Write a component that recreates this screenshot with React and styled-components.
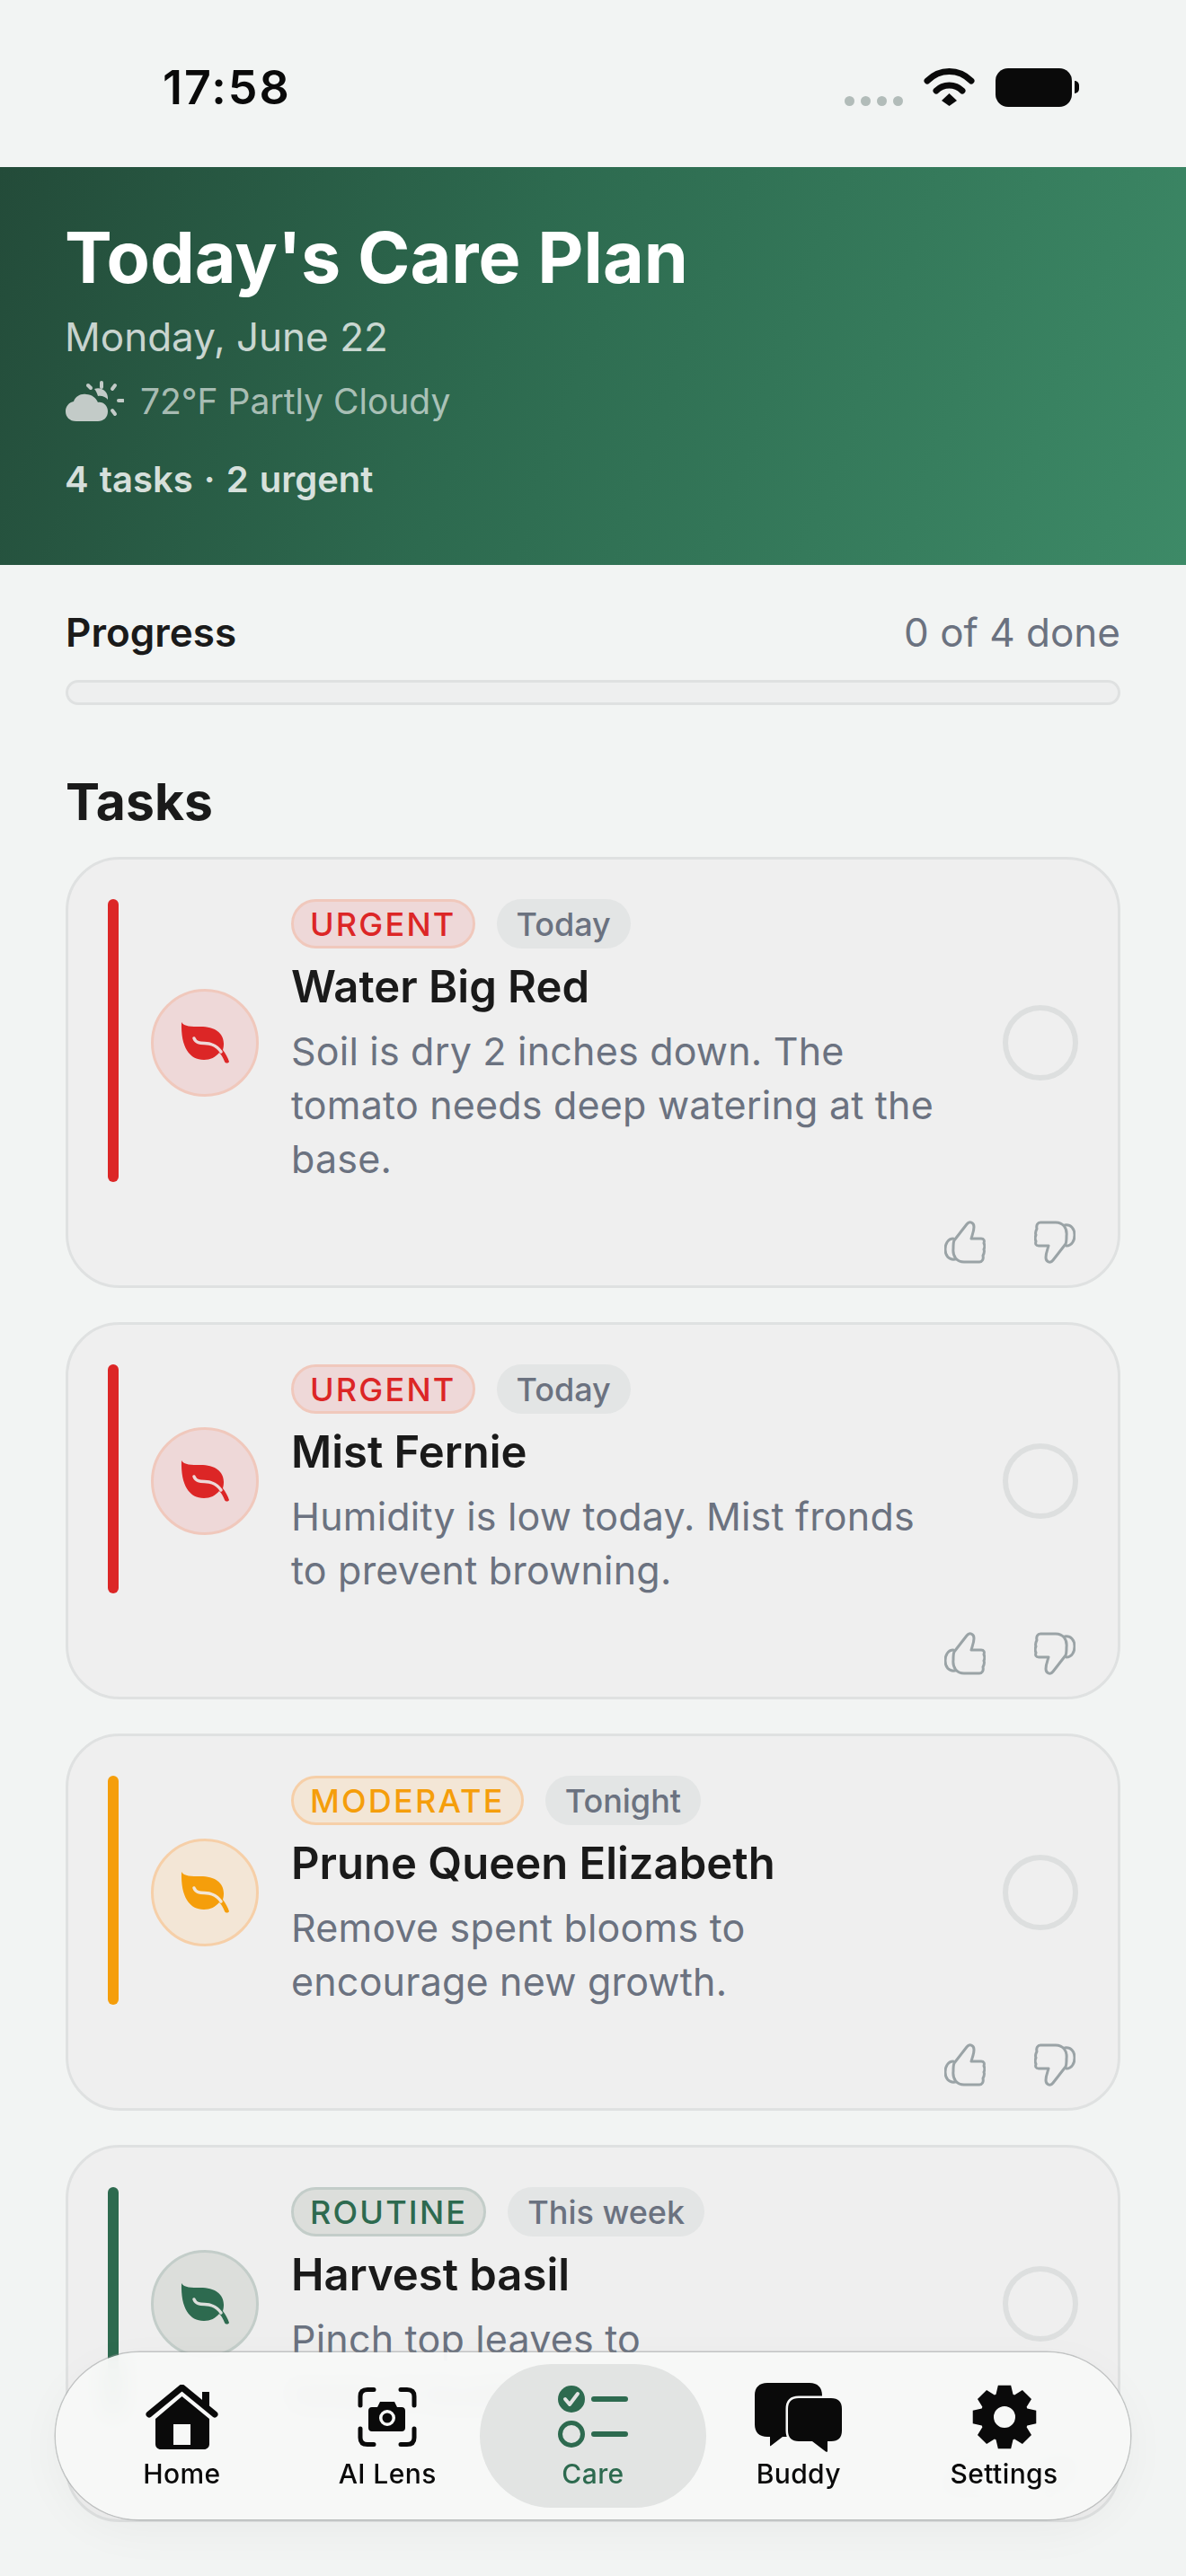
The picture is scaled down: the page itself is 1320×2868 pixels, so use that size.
import React from 'react';
import styled, { createGlobalStyle } from 'styled-components';

const tones = {
  urgent: { main: '#dc2626', soft: '#eed8d8', edge: '#f0c8bc' },
  moderate: { main: '#f59e0b', soft: '#f3e6d6', edge: '#f6cfa8' },
  routine: { main: '#2d6a4f', soft: '#dcdedb', edge: '#c3cdc9' },
};

const GlobalStyle = createGlobalStyle`
  html, body {
    margin: 0;
    padding: 0;
    background: #f2f4f3;
  }
  body {
    font-family: Inter, "Liberation Sans", sans-serif;
    color: #1a1a1a;
  }
`;

const Screen = styled.div`
  position: relative;
  width: 1320px;
  height: 2868px;
  overflow: hidden;
  background: #f2f4f3;
`;

const StatusBar = styled.div`
  height: 186px;
  box-sizing: border-box;
  padding: 0 127px 0 181px;
  display: flex;
  align-items: center;
  justify-content: space-between;
`;

const Clock = styled.div`
  font-size: 52px;
  font-weight: 600;
  letter-spacing: 2px;
  color: #0a0a0a;
  margin-top: 9px;
`;

const StatusIcons = styled.div`
  display: flex;
  align-items: center;
  gap: 23px;
  margin-top: 8px;
`;

const SignalDots = styled.div`
  display: flex;
  gap: 7px;
  margin-top: 30px;
`;

const SignalDot = styled.span`
  width: 11px;
  height: 11px;
  border-radius: 50%;
  background: #b2bcb9;
`;

const Battery = styled.div`
  position: relative;
  width: 85px;
  height: 43px;
  border-radius: 14px;
  background: #0a0a0a;

  &::after {
    content: '';
    position: absolute;
    right: -8px;
    top: 14px;
    width: 5px;
    height: 14px;
    border-radius: 0 6px 6px 0;
    background: #0a0a0a;
  }
`;

const Hero = styled.header`
  height: 443px;
  box-sizing: border-box;
  padding: 51px 72px 0;
  background: linear-gradient(110deg, #234b39 0%, #2d6a4f 42%, #3d8a67 100%);
  color: #fff;
`;

const HeroTitle = styled.h1`
  margin: 0;
  font-size: 79px;
  line-height: 98px;
  font-weight: 700;
  color: #fff;
`;

const HeroDate = styled.div`
  margin-top: 12px;
  font-size: 44px;
  line-height: 56px;
  color: rgba(255, 255, 255, 0.75);
`;

const Weather = styled.div`
  margin-top: 18px;
  display: flex;
  align-items: center;
  gap: 18px;
  font-size: 39px;
  line-height: 52px;
  color: rgba(255, 255, 255, 0.62);
`;

const HeroCount = styled.div`
  margin-top: 36px;
  font-size: 40px;
  line-height: 50px;
  font-weight: 600;
  word-spacing: 2px;
  color: rgba(255, 255, 255, 0.82);
`;

const Content = styled.main`
  padding: 50px 73px 0;
`;

const ProgressRow = styled.div`
  display: flex;
  align-items: center;
  justify-content: space-between;
  font-size: 44px;
  line-height: 50px;
`;

const ProgressLabel = styled.span`
  font-weight: 600;
`;

const ProgressValue = styled.span`
  color: #6b7280;
`;

const ProgressTrack = styled.div`
  margin-top: 28px;
  height: 28px;
  box-sizing: border-box;
  border: 3px solid #dfe1e1;
  border-radius: 14px;
  background: #eeefef;
`;

const SectionTitle = styled.h2`
  margin: 72px 0 25px;
  font-size: 57px;
  line-height: 72px;
  font-weight: 700;
`;

const TaskList = styled.div`
  display: flex;
  flex-direction: column;
  gap: 38px;
`;

const Card = styled.article`
  box-sizing: border-box;
  border: 3px solid #dfe1e1;
  border-radius: 60px;
  background: #efefef;
  padding: 44px 44px 24px 44px;
`;

const CardBody = styled.div`
  display: flex;
  align-items: stretch;
  gap: 36px;
`;

const SeverityBar = styled.div`
  width: 12px;
  flex: none;
  margin-bottom: 4px;
  border-radius: 6px;
  background: ${(p) => tones[p.$tone].main};
`;

const LeafBadge = styled.div`
  flex: none;
  align-self: center;
  width: 120px;
  height: 120px;
  box-sizing: border-box;
  border: 3px solid ${(p) => tones[p.$tone].edge};
  border-radius: 50%;
  background: ${(p) => tones[p.$tone].soft};
  display: flex;
  align-items: center;
  justify-content: center;
`;

const CardText = styled.div`
  flex: 1;
  min-width: 0;
`;

const TagRow = styled.div`
  display: flex;
  gap: 24px;
`;

const SeverityTag = styled.span`
  height: 55px;
  box-sizing: border-box;
  padding: 0 18px;
  display: flex;
  align-items: center;
  border: 3px solid ${(p) => tones[p.$tone].edge};
  border-radius: 28px;
  background: ${(p) => tones[p.$tone].soft};
  color: ${(p) => tones[p.$tone].main};
  font-size: 36px;
  font-weight: 500;
  letter-spacing: 2.2px;
`;

const TimeTag = styled.span`
  height: 55px;
  box-sizing: border-box;
  padding: 0 22px;
  display: flex;
  align-items: center;
  border-radius: 28px;
  background: #e3e5e5;
  color: #6b7280;
  font-size: 36px;
  font-weight: 500;
`;

const TaskTitle = styled.h3`
  margin: 10px 0 0;
  font-size: 49px;
  line-height: 66px;
  font-weight: 600;
  color: #1a1a1a;
`;

const TaskNote = styled.p`
  margin: 8px 0 0;
  font-size: 43px;
  line-height: 60px;
  letter-spacing: 0.2px;
  color: #6b7280;
`;

const CheckRing = styled.div`
  flex: none;
  align-self: center;
  width: 84px;
  height: 84px;
  box-sizing: border-box;
  border: 6px solid #dddfdf;
  border-radius: 50%;
`;

const Feedback = styled.div`
  margin-top: 39px;
  padding-right: 3px;
  display: flex;
  justify-content: flex-end;
  gap: 54px;
`;

const TabBar = styled.nav`
  position: absolute;
  left: 62px;
  top: 2619px;
  width: 1196px;
  height: 186px;
  box-sizing: border-box;
  padding: 0 26px;
  display: grid;
  grid-template-columns: repeat(5, 1fr);
  border-radius: 93px;
  background: rgba(248, 249, 248, 0.93);
  backdrop-filter: blur(14px);
  box-shadow: 0 0 0 1.5px rgba(140, 145, 145, 0.45), 0 14px 50px rgba(0, 0, 0, 0.04);
`;

const TabItem = styled.div`
  margin: 13px ${(p) => (p.$active ? '-12px' : '0')};
  display: flex;
  flex-direction: column;
  align-items: center;
  border-radius: 80px;
  background: ${(p) => (p.$active ? '#e2e4e3' : 'transparent')};
  color: ${(p) => (p.$active ? '#2d6a4f' : '#0a0a0a')};
`;

const TabIcon = styled.div`
  height: 78px;
  margin-top: 20px;
  display: flex;
  align-items: center;
  justify-content: center;
`;

const TabLabel = styled.div`
  margin-top: 5px;
  font-size: 30px;
  line-height: 38px;
  font-weight: 500;
  letter-spacing: 0.4px;
`;

const WifiIcon = () => (
  <svg width="57" height="43" viewBox="0 0 57 43" fill="none" stroke="#0a0a0a" strokeWidth="7" strokeLinecap="round">
    <path d="M4 14C18 0 39 0 53 14" />
    <path d="M14 25C22 17 35 17 43 25" />
    <path d="M20 36L28.5 28L37 36L28.5 42Z" fill="#0a0a0a" stroke="none" />
  </svg>
);

const WeatherIcon = () => (
  <svg width="66" height="46" viewBox="0 0 66 46" fill="#c3cbc8">
    <path d="M33 9C40 6 49 11 48 21C46 18 41 16 37 17C36 14 35 11 33 9Z" />
    <path d="M13 45C5 45 1 40 1 34C1 28 5 24 10 23C12 17 18 14 24 15C30 15 35 19 37 24C43 23 48 28 48 34C48 41 43 45 37 45Z" />
    <g stroke="#c3cbc8" strokeWidth="4" strokeLinecap="round" fill="none">
      <path d="M41 2V7" />
      <path d="M26 5L29 8" />
      <path d="M56 5L53 9" />
      <path d="M60 22H65" />
      <path d="M53 33L56 37" />
    </g>
  </svg>
);

const LeafIcon = ({ tone }) => (
  <svg width="54" height="46" viewBox="0 0 54 46">
    <path
      fill={tones[tone].main}
      d="M1 0C4 5 12 5 22 5C38 5 48 12 48 24C48 27 47.5 29 47 31C50 35 52.5 39 54 44C53 46 50 46 49 44C47.5 40 46 37 43 34C39 39 33 42 26 42C10 42 0 28 1 0Z"
    />
    <path
      fill="none"
      stroke={tones[tone].soft}
      strokeWidth="3.5"
      strokeLinecap="round"
      d="M15 18C18 26 28 22 35 25C40 27 43 30 45 33"
    />
  </svg>
);

const ThumbIcon = ({ down }) => (
  <svg
    width="46"
    height="48"
    viewBox="0 0 46 48"
    fill="none"
    stroke="#9aa3a6"
    strokeWidth="3"
    strokeLinecap="round"
    strokeLinejoin="round"
    transform={down ? 'rotate(180)' : undefined}
  >
    <path d="M11 22L25 4C28 0 33 2 33 7C33 12 31 16 30 20H41C44 20 45 22 44 25C45 27 45 30 44 32C45 34 44 37 43 39C44 43 42 46 39 46H22C14 46 9 40 10 31C10 27 10 24 11 22Z" />
    <path d="M10 20C4 20 1 26 1 32C1 39 5 44 12 43" />
  </svg>
);

const HomeIcon = () => (
  <svg width="81" height="72" viewBox="0 0 81 72" fill="currentColor">
    <path fill="none" stroke="currentColor" strokeWidth="7" strokeLinecap="round" strokeLinejoin="round" d="M4 33L40.5 3L77 33" />
    <path d="M63 8H71V26L63 20Z" />
    <path
      fillRule="evenodd"
      d="M40.5 13L71 38V66C71 69.5 68.5 72 65 72H17C13.5 72 11 69.5 11 66V38ZM31 44V67H50V44Z"
    />
  </svg>
);

const LensIcon = () => (
  <svg width="66" height="66" viewBox="0 0 66 66" fill="none">
    <g stroke="currentColor" strokeWidth="5" strokeLinecap="round">
      <path d="M3 20V10C3 5 6 2.5 11 2.5H18" />
      <path d="M48 2.5H55C60 2.5 63 5 63 10V20" />
      <path d="M3 46V56C3 61 6 63.5 11 63.5H18" />
      <path d="M48 63.5H55C60 63.5 63 61 63 56V46" />
    </g>
    <path
      fill="currentColor"
      fillRule="evenodd"
      d="M16 22H22L25 16H41L44 22H49C51.5 22 53 23.5 53 26V45C53 47.5 51.5 49 49 49H16C13.5 49 12 47.5 12 45V26C12 23.5 13.5 22 16 22ZM33 25A9 9 0 1 0 33 43A9 9 0 1 0 33 25ZM33 28.5A5.5 5.5 0 1 1 33 39.5A5.5 5.5 0 1 1 33 28.5Z"
    />
  </svg>
);

const CareIcon = () => (
  <svg width="78" height="70" viewBox="0 0 78 70" fill="none" stroke="currentColor">
    <circle cx="15" cy="15" r="15" fill="currentColor" stroke="none" />
    <path d="M8 15L13 21L22 9" stroke="#e2e4e3" strokeWidth="4" strokeLinecap="round" strokeLinejoin="round" />
    <circle cx="15" cy="54" r="12.5" strokeWidth="5" />
    <path d="M40 15H75M40 54H75" strokeWidth="6" strokeLinecap="round" />
  </svg>
);

const BuddyIcon = () => (
  <svg width="97" height="77" viewBox="0 0 97 77" fill="currentColor">
    <path d="M14 0H61C70 0 75 5 75 14V46C75 55 70 60 61 60H31L18 70C17 70.5 17 70.5 17 69V60H14C5 60 0 55 0 46V14C0 5 5 0 14 0Z" />
    <path
      stroke="#f7f8f7"
      strokeWidth="5"
      paintOrder="stroke"
      d="M49 17H85C93 17 97 21 97 29V53C97 61 93 65 85 65H81V76C81 77 80 77 79 76.5L64 65H49C41 65 37 61 37 53V29C37 21 41 17 49 17Z"
    />
  </svg>
);

// eight flat teeth round a ring, computed so they stay evenly spaced
const gearPath = (() => {
  const pts = [];
  for (let i = 0; i < 8; i++) {
    const a = (i * Math.PI) / 4;
    [[-0.36, 27], [-0.2, 36], [0.2, 36], [0.36, 27]].forEach(([da, r]) => {
      pts.push(`${(36 + r * Math.sin(a + da)).toFixed(2)} ${(36 - r * Math.cos(a + da)).toFixed(2)}`);
    });
  }
  return `M${pts.join('L')}Z`;
})();

const GearIcon = () => (
  <svg width="72" height="72" viewBox="0 0 72 72" fill="currentColor">
    <path
      fillRule="evenodd"
      d={`${gearPath}M36 24A12 12 0 1 0 36 48A12 12 0 1 0 36 24Z`}
    />
  </svg>
);

const tasks = [
  { id: 1, tone: 'urgent', tag: 'URGENT', when: 'Today', title: 'Water Big Red', note: <>Soil is dry 2 inches down. The<br />tomato needs deep watering at the<br />base.</> },
  { id: 2, tone: 'urgent', tag: 'URGENT', when: 'Today', title: 'Mist Fernie', note: <>Humidity is low today. Mist fronds<br />to prevent browning.</> },
  { id: 3, tone: 'moderate', tag: 'MODERATE', when: 'Tonight', title: 'Prune Queen Elizabeth', note: <>Remove spent blooms to<br />encourage new growth.</> },
  { id: 4, tone: 'routine', tag: 'ROUTINE', when: 'This week', title: 'Harvest basil', note: <>Pinch top leaves to<br />keep it bushy.</> },
];

const tabs = [
  { label: 'Home', icon: <HomeIcon /> },
  { label: 'AI Lens', icon: <LensIcon /> },
  { label: 'Care', icon: <CareIcon />, active: true },
  { label: 'Buddy', icon: <BuddyIcon /> },
  { label: 'Settings', icon: <GearIcon /> },
];

function App() {
  return (
    <Screen>
      <GlobalStyle />
      <StatusBar>
        <Clock>17:58</Clock>
        <StatusIcons>
          <SignalDots>
            <SignalDot />
            <SignalDot />
            <SignalDot />
            <SignalDot />
          </SignalDots>
          <WifiIcon />
          <Battery />
        </StatusIcons>
      </StatusBar>
      <Hero>
        <HeroTitle>Today's Care Plan</HeroTitle>
        <HeroDate>Monday, June 22</HeroDate>
        <Weather>
          <WeatherIcon />
          72°F Partly Cloudy
        </Weather>
        <HeroCount>4 tasks · 2 urgent</HeroCount>
      </Hero>
      <Content>
        <ProgressRow>
          <ProgressLabel>Progress</ProgressLabel>
          <ProgressValue>0 of 4 done</ProgressValue>
        </ProgressRow>
        <ProgressTrack />
        <SectionTitle>Tasks</SectionTitle>
        <TaskList>
          {tasks.map((task) => (
            <Card key={task.id}>
              <CardBody>
                <SeverityBar $tone={task.tone} />
                <LeafBadge $tone={task.tone}>
                  <LeafIcon tone={task.tone} />
                </LeafBadge>
                <CardText>
                  <TagRow>
                    <SeverityTag $tone={task.tone}>{task.tag}</SeverityTag>
                    <TimeTag>{task.when}</TimeTag>
                  </TagRow>
                  <TaskTitle>{task.title}</TaskTitle>
                  <TaskNote>{task.note}</TaskNote>
                </CardText>
                <CheckRing />
              </CardBody>
              <Feedback>
                <ThumbIcon />
                <ThumbIcon down />
              </Feedback>
            </Card>
          ))}
        </TaskList>
      </Content>
      <TabBar>
        {tabs.map((tab) => (
          <TabItem key={tab.label} $active={tab.active}>
            <TabIcon>{tab.icon}</TabIcon>
            <TabLabel>{tab.label}</TabLabel>
          </TabItem>
        ))}
      </TabBar>
    </Screen>
  );
}

export default App;
